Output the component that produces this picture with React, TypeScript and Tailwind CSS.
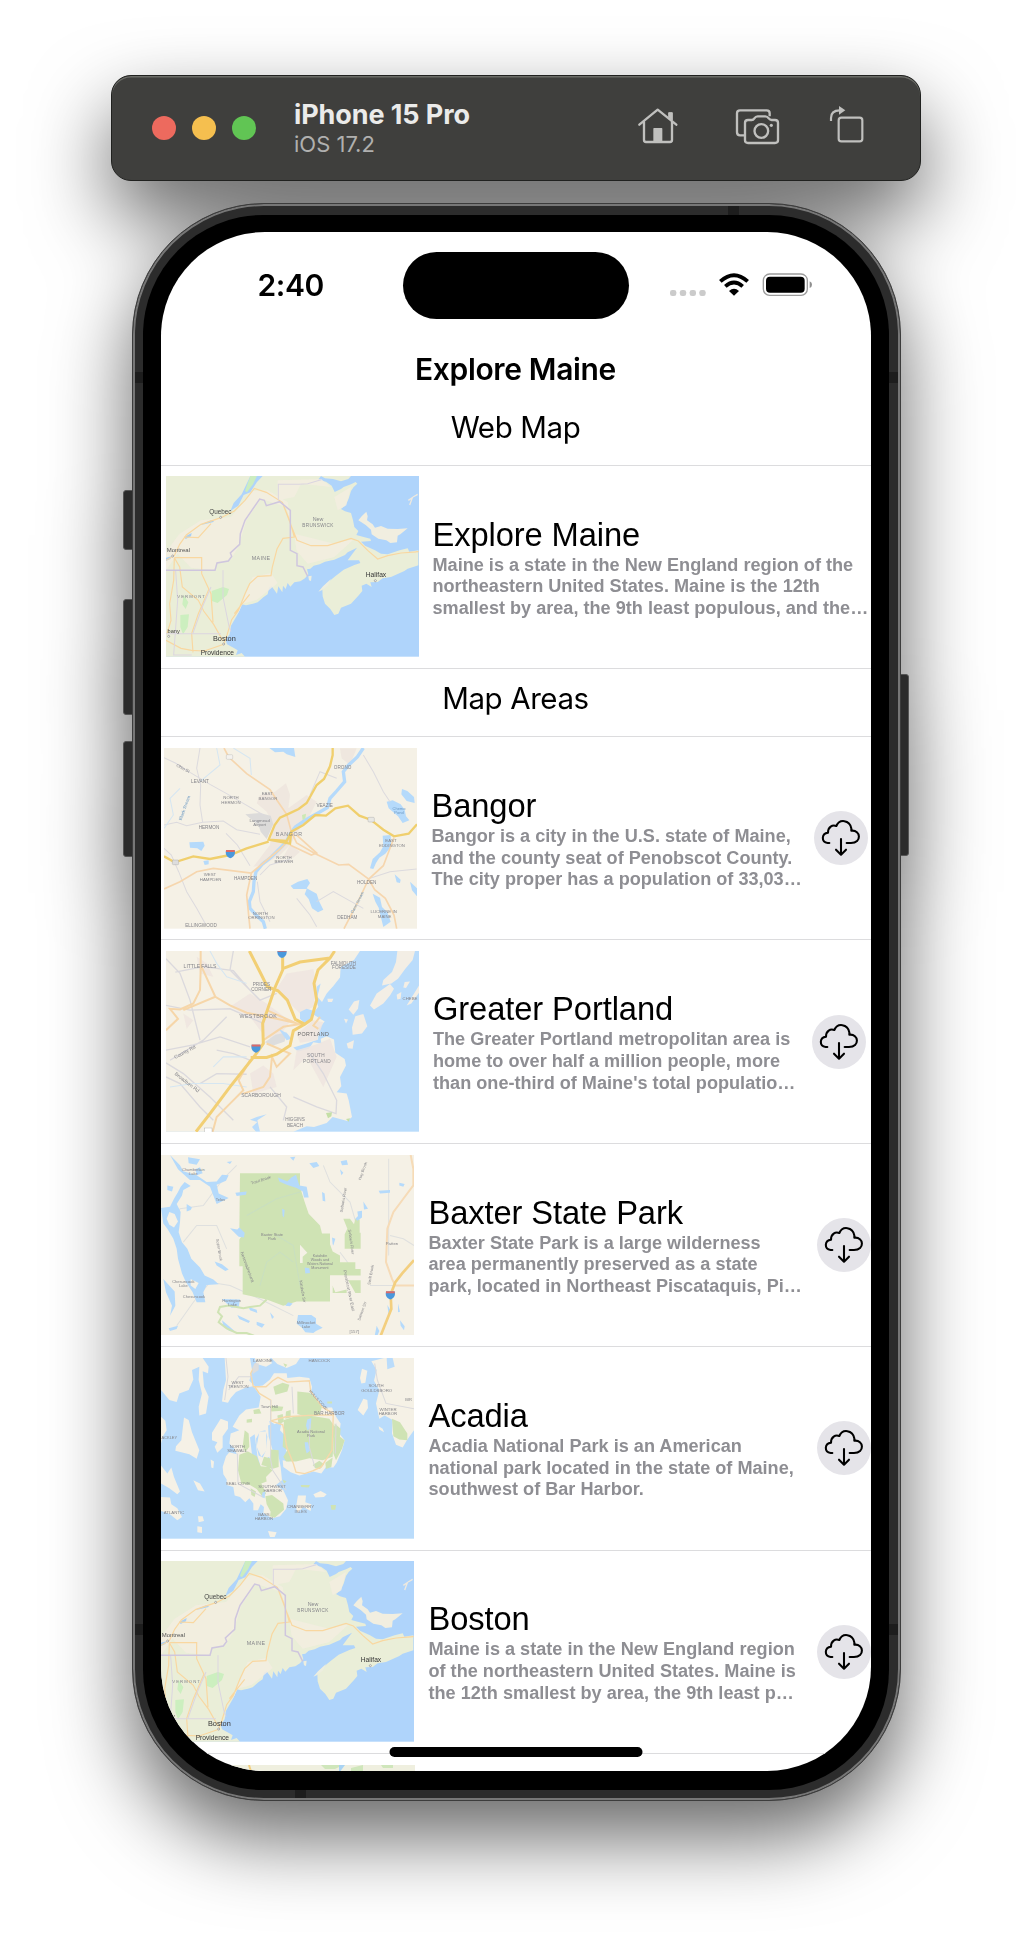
import React from "react";

const LABEL = "#85858a";

type LabelProps = { x: number; y: number; size?: number; fill?: string; rotate?: number; spacing?: number; children: string };

function Label({ x, y, size = 15, fill = LABEL, rotate = 0, spacing = 0, children }: LabelProps) {
  return (
    <text x={x} y={y} fontSize={size} fill={fill} textAnchor="middle" letterSpacing={spacing} fontFamily="'Liberation Sans', sans-serif" transform={`rotate(${rotate} ${x} ${y})`}>
      {children}
    </text>
  );
}

function Shield({ x, y }: { x: number; y: number }) {
  return (
    <g>
      <path d={`M${x - 13} ${y - 10}h26c3 12-2 20-13 24c-11-4-16-12-13-24z`} fill="#4a98dc" />
      <path d={`M${x - 13} ${y - 11}h26v6h-26z`} fill="#dc6a68" />
    </g>
  );
}

function MapFrame({ box, label, children }: { box: string; label: string; children: React.ReactNode }) {
  return (
    <svg className="h-[180.7px] w-[253px] shrink-0" viewBox={box} preserveAspectRatio="none" role="img" aria-label={label}>
      {children}
    </svg>
  );
}

function MaineMap() {
  return (
    <MapFrame box="135 467 759 542" label="Maine map">
      <rect x="135" y="467" width="759" height="542" fill="#afd4fb" />
      <path d="M135 467H600L590 480L615 484L632 496L641 515L660 506L668 500L690 492L704 485L709 490L698 500L690 512L683 535L672 556L660 566L672 573L690 578L696 600L700 620L712 632L706 644L728 650L748 655L750 662L720 664L732 676L762 690L780 700L800 702L836 690L860 684L865 694L892 690V735L860 745L850 752L810 770L785 774L770 785L748 786L752 800L736 790L722 796L724 812L712 826L690 850L660 862L652 880L640 884L628 866L612 850L605 828L604 806L614 792L640 770L668 748L700 734L718 728L714 720L680 720L690 706L708 682L680 696L672 704L640 718L612 724L596 732L578 736L568 745L558 747L562 762L552 774L538 783L520 786L508 799L500 788L494 806L486 796L484 816L472 798L468 820L452 798L444 802L440 822L428 830L410 846L396 850L375 855L362 852L356 870L344 892L330 916L326 942L314 958L318 972L340 984L350 990L345 1004L362 998L372 1009H135Z" fill="#eaeed8" />
      <path d="M640 467H690L682 476L660 483L636 476L612 474L600 467Z" fill="#eaeed8" />
      <path d="M712 600L722 588L736 574L740 588L738 600L755 612L762 622L780 617L800 625L830 626L860 624L838 642L830 646L828 666L808 668L796 660L772 655L752 642L750 628L734 614Z" fill="#f1eee0" />
      <path d="M862 540L874 532L866 554M876 530L890 522" stroke="#eee9df" strokeWidth="4" fill="none" />
      <path d="M562 768L572 766L570 782L564 780ZM592 814L606 798L630 776L620 796L602 810Z" fill="#edeee0" />
      <path d="M135 694L176 640L240 600L330 590L396 512L440 510L500 545L512 620L496 560L420 536L376 600L352 680L330 716L286 730L280 750L210 742L170 700L135 750ZM345 892L395 770L450 758L470 788L408 838L365 850ZM470 480L600 476L630 500L540 490L520 530L470 540ZM640 530L690 500L676 555L650 570ZM520 640L640 670L700 655L640 710L560 730L526 690Z" fill="#f3ede0" opacity=".85" />
      <path d="M388 467H425L408 485L388 516L368 524L352 556L328 572L338 548L362 522Z" fill="#afd4fb" />
      <path d="M388 467H408L396 492L378 516L372 512Z" fill="#ccedc0" />
      <path d="M272 812L306 800L324 806L318 824L290 848L272 842ZM188 824L202 846L194 866L184 852ZM178 884L204 882L200 920L186 942L178 920Z" fill="#ccefbf" />
      <path d="M190 650L212 638L210 648L194 656ZM236 614L270 600L280 604L250 612ZM135 712L152 708L148 716L135 722Z" fill="#a9cff4" />
      <path d="M135 720L160 706L176 672L196 644L240 612L300 592L340 572L372 540L400 504L436 516L484 546L512 620L528 660L570 676L620 676L690 654L712 662L740 690L770 716L800 706L840 698L893 694M484 546L506 600L520 650L486 654L468 686L454 740L450 766L410 768L386 790L372 820L352 870L332 898L318 944L308 972L250 992L212 990L180 984L135 960M160 712L176 740L184 800L232 840L248 872L278 912L306 962M160 712H242V760L270 820L276 906M216 996L212 940L232 880L264 806M160 712L158 780L146 850L150 900L138 940M386 822L340 880M190 650L232 652L270 610" fill="none" stroke="#f9d7a0" strokeWidth="3.5" />
      <path d="M135 750H282L288 728L322 722L332 708L328 698L356 672L358 640L372 600L416 536L430 540L436 556L476 544L508 570V690L528 700V736L546 740L560 768" fill="none" stroke="#cfc6de" strokeWidth="4.500" />
      <path d="M306 750V830L324 918L330 934M135 940H300M164 752L170 840L158 1004H212M472 540V492H534L560 490L600 478M270 800L244 860L216 938" fill="none" stroke="#dbd5e0" strokeWidth="3" />
      <Label x={298} y={580} size={19} fill="#444">Quebec</Label>
      <Label x={172} y={695} size={18} fill="#555">Montreal</Label>
      <Label x={591} y={602} size={16}>New</Label>
      <Label x={591} y={620} size={14} spacing={1}>BRUNSWICK</Label>
      <Label x={420} y={719} size={16} spacing={1}>MAINE</Label>
      <Label x={212} y={833} size={13} spacing={3}>VERMONT</Label>
      <Label x={765} y={769} size={20} fill="#333">Halifax</Label>
      <Label x={158} y={938} size={17} fill="#444">bany</Label>
      <Label x={310} y={963} size={22} fill="#333">Boston</Label>
      <Label x={289} y={1004} size={20} fill="#333">Providence</Label>
      <g fill="#fff" stroke="#888" strokeWidth="2">
        <circle cx="299" cy="591" r="3" /><circle cx="155" cy="707" r="3" /><circle cx="763" cy="781" r="3" /><circle cx="308" cy="971" r="3" /><circle cx="143" cy="948" r="3" />
      </g>
    </MapFrame>
  );
}

function BangorMap() {
  return (
    <MapFrame box="42 39 759 542" label="Bangor map">
      <rect x="42" y="39" width="759" height="542" fill="#f5f1e6" />
      <path d="M375 170L408 145L420 180L415 220L470 180L500 200L480 240L450 280L420 330L390 360L340 390L310 395L360 330L370 270L350 230L320 205L330 180ZM570 40H620L600 90L575 70ZM420 330L450 350L430 368L400 365Z" fill="#eee5de" opacity=".9" />
      <path d="M286 238L330 234L362 242L370 268L350 312L332 290L326 272Z" fill="#dcdbda" />
      <path d="M358 39H432L436 66L410 58L400 50L375 52ZM118 322L160 320L164 332L154 348L142 340L120 338ZM160 378L176 376V388L164 390ZM756 162L772 168L792 186L794 204L770 198L754 178ZM710 200L728 196L752 208L764 224L768 244L778 256L758 264L744 244L716 220ZM698 302L722 300L724 334L706 356L688 368L678 384L670 402L660 400L668 372L690 352L700 334ZM422 452L444 440L472 432L480 444L470 460L500 476L508 500L520 524L504 532L486 520L476 492L464 478L470 462L430 462ZM734 418L752 434L750 444L740 442ZM780 440L801 460V484L786 466ZM668 476L690 488L696 516L712 532L722 560L700 576L694 552L686 518L676 500Z" fill="#b5dafb" />
      <path d="M640 39L622 66L596 90L580 110L584 140L560 168L540 190L532 218L500 236L468 254L436 276L418 300L410 320L388 342L364 366L336 388L318 410L312 440L310 470L298 500L300 520L318 540L340 560L346 581" fill="none" stroke="#b5dafb" strokeWidth="10" />
      <path d="M42 68L76 84L120 112L180 148L230 176L280 205L340 240M150 39L140 100L152 150L150 210L158 262L220 258L260 284L330 298M42 270L80 262L110 272L158 262M228 295L262 330L300 392M42 340L64 360L86 410L110 470L140 520L165 565M330 420L360 390L420 372M322 440L330 500L360 560M480 180L510 110L560 130M440 490L480 540L500 575M500 500L550 470L640 520M660 430L720 410L800 402M640 60L670 110L700 170L720 200" fill="none" stroke="#dcdade" strokeWidth="3" />
      <path d="M42 280L70 240L60 190L90 160M200 39L210 90L150 140M250 39L300 70L304 120" fill="none" stroke="#d5e6f2" strokeWidth="3" />
      <path d="M222 39L236 66L290 116L360 164L384 200L410 238L424 290L440 324L496 356L566 390L596 388L656 432L674 464L706 490L732 540L740 581M42 462L90 440L140 410L190 400L304 414L340 384L390 342L420 312M304 414L290 480L300 581M656 432L624 500L582 581M656 432L700 392L716 350L732 308M440 300L500 354L484 360L420 330" fill="none" stroke="#f6d6ae" strokeWidth="5" />
      <path d="M548 39V60L540 94L522 132L500 150L470 204L446 222L412 238L390 248L374 270L356 314L410 318L424 290L460 270L496 240L528 242L556 220L594 212L628 242L662 254L700 284L732 304L776 296L801 268M42 364L74 382L130 364L180 372L240 360L290 340L356 320M356 314L420 326L424 290" fill="none" stroke="#f0cf6d" strokeWidth="7" />
      <path d="M456 240L468 236L466 250L458 256Z" fill="#cce8b4" />
      <rect x="229" y="59" width="19" height="14" rx="3" fill="#f4f2ee" stroke="#aaa" />
      <rect x="654" y="247" width="19" height="14" rx="3" fill="#e8e8e4" stroke="#999" />
      <rect x="67" y="375" width="19" height="14" rx="3" fill="#ddd" stroke="#999" />
      <Shield x={241} y={356} />
      <Label x={97} y={104} size={13} rotate={28}>Ohio St</Label>
      <Label x={150} y={145} size={14}>LEVANT</Label>
      <Label x={243} y={191} size={13}>NORTH</Label>
      <Label x={243} y={206} size={13}>HERMON</Label>
      <Label x={352} y={181} size={13}>EAST</Label>
      <Label x={354} y={195} size={13}>BANGOR</Label>
      <Label x={578} y={103} size={14}>ORONO</Label>
      <Label x={524} y={216} size={14}>VEAZIE</Label>
      <Label x={329} y={260} size={13}>Langmead</Label>
      <Label x={329} y={273} size={13}>Airport</Label>
      <Label x={177} y={282} size={14}>HERMON</Label>
      <Label x={418} y={304} size={16} spacing={2}>BANGOR</Label>
      <Label x={747} y={226} size={12} fill="#6d9ac3">Chemo</Label>
      <Label x={747} y={238} size={12} fill="#6d9ac3">Pond</Label>
      <Label x={723} y={321} size={13}>EAST</Label>
      <Label x={726} y={336} size={13}>EDDINGTON</Label>
      <Label x={402} y={371} size={13}>NORTH</Label>
      <Label x={402} y={385} size={13}>BREWER</Label>
      <Label x={180} y={422} size={13}>WEST</Label>
      <Label x={182} y={437} size={13}>HAMPDEN</Label>
      <Label x={287} y={435} size={14}>HAMPDEN</Label>
      <Label x={650} y={447} size={14}>HOLDEN</Label>
      <Label x={331} y={539} size={13}>NORTH</Label>
      <Label x={334} y={553} size={13}>ORRINGTON</Label>
      <Label x={592} y={553} size={14}>DEDHAM</Label>
      <Label x={701} y={533} size={13}>LUCERNE IN</Label>
      <Label x={704} y={548} size={13}>MAINE</Label>
      <Label x={153} y={576} size={14}>ELLINGWOOD</Label>
      <Label x={108} y={220} size={13} rotate={-70} fill="#6d9ac3">Black Stream</Label>
      <Label x={626} y={504} size={12} rotate={-62} fill="#6d9ac3">Dane Stream</Label>
    </MapFrame>
  );
}

function PortlandMap() {
  return (
    <MapFrame box="48 33 759 541" label="Greater Portland map">
      <rect x="48" y="33" width="759" height="541" fill="#badcfb" />
      <path d="M48 33H630L612 60L572 82L570 112L550 138L530 160L516 186L502 170L512 130L500 140L498 180L505 200L488 222L524 244L506 266L504 298L470 310L430 322L444 334L476 326L490 306L514 310L512 296L530 288L552 298L556 338L584 356L588 376L570 410L574 438L560 456L590 460L596 480L606 530L592 542L548 530L530 548L492 560L470 558L430 574H330L322 540L350 522L320 530L300 538L322 545L306 560L318 574H48Z" fill="#f5f1e6" />
      <path d="M742 33H795L788 60L766 86L744 116L724 130L696 136L700 120L726 96L738 66ZM660 196L680 160L720 132L732 146L720 166L700 190L672 208ZM596 208L612 184L628 180L624 206L610 224ZM606 262L616 228L640 222L652 258L636 280L608 284ZM532 176L550 176L546 186L534 186ZM590 310L612 300L608 326L594 324ZM764 126L780 124L768 144L760 142ZM740 164L754 156L752 176L742 178ZM770 196L807 136V158L784 190ZM582 236L594 238L588 250Z" fill="#f3eee5" />
      <path d="M378 150L410 100L490 88L500 140L490 200L450 220L420 190ZM240 200L300 160L350 190L390 220L420 244L380 300L345 290L300 230ZM300 400L340 376L370 400L380 440L310 460ZM440 330L500 312L540 296L560 350L520 440L470 350L430 390ZM440 282L490 240L520 246L500 300L450 308ZM100 220L130 240L110 266ZM140 50L170 70L190 110L150 100Z" fill="#eee5df" opacity=".85" />
      <path d="M344 306L376 284L410 276L404 304L370 316Z" fill="#dddddd" />
      <path d="M450 216L470 206L490 212L484 238L464 250L450 236ZM386 266L412 280L424 296L410 300Z" fill="#badcfb" />
      <path d="M48 56L90 100L120 180L150 300M76 96L160 80L250 92L300 150M48 196L120 210L240 206L340 250M48 330L130 314L210 290L300 320M150 430L200 400L290 402M48 368L100 400L180 470L250 540M48 410L90 430L150 500L190 540M250 33L240 90L330 180L380 160M230 230L160 300L60 360M480 340L520 400L560 480L558 520L500 500L430 470M360 440L410 500L400 540M300 360L250 340L200 330" fill="none" stroke="#dbd9dd" strokeWidth="4" />
      <path d="M180 33L200 70L230 110L290 130M60 440L130 430L220 430L290 440M190 380L220 350L290 350" fill="none" stroke="#d5e6f2" strokeWidth="3" />
      <path d="M152 33V90L150 150L130 190L90 208L60 206L84 236L48 270M150 70L196 170L240 196L290 218L380 236L460 254M196 170L100 210M340 300L400 260L460 250M300 360L266 420L280 450L240 490L200 530L188 574M350 310L420 340L380 380L366 350L360 410L340 440L280 460M510 230L490 256L505 266M350 210L440 250" fill="none" stroke="#f6d6a9" strokeWidth="6" />
      <path d="M298 33L330 96L352 140L384 152L412 180L436 238L464 252L484 238L500 180L492 130L504 90L540 54L554 33M398 33V90L376 140L352 210L338 250L340 310L316 344L240 440L180 520L138 574M398 86L450 66L540 54M464 252L430 272L420 316L380 342L350 352H302" fill="none" stroke="#f2cf74" strokeWidth="9" />
      <path d="M528 518L546 516L544 528L534 534ZM588 536L600 534L596 544Z" fill="#c5dfa6" />
      <Shield x={396} y={40} />
      <Shield x={318} y={324} />
      <rect x="164" y="563" width="22" height="14" fill="#fff" stroke="#999" />
      <Label x={150} y={84} size={15}>LITTLE FALLS</Label>
      <Label x={580} y={74} size={14}>FALMOUTH</Label>
      <Label x={582} y={88} size={14}>FORESIDE</Label>
      <Label x={334} y={137} size={14}>PRIDES</Label>
      <Label x={334} y={152} size={14}>CORNER</Label>
      <Label x={325} y={235} size={16} spacing={1}>WESTBROOK</Label>
      <Label x={490} y={289} size={16} spacing={1} fill="#666">PORTLAND</Label>
      <Label x={498} y={350} size={14} spacing={1}>SOUTH</Label>
      <Label x={501} y={367} size={14} spacing={1}>PORTLAND</Label>
      <Label x={333} y={469} size={15}>SCARBOROUGH</Label>
      <Label x={435} y={543} size={14}>HIGGINS</Label>
      <Label x={435} y={559} size={14}>BEACH</Label>
      <Label x={780} y={180} size={13}>CHEBE</Label>
      <Label x={107} y={340} rotate={-28}>County Rd</Label>
      <Label x={108} y={430} rotate={38}>Broadturn Rd</Label>
    </MapFrame>
  );
}

function BaxterMap() {
  return (
    <MapFrame box="33 29 759 541" label="Baxter State Park map">
      <rect x="33" y="29" width="759" height="541" fill="#f5f1e6" />
      <path d="M60 240L90 190L160 180L220 100L260 60M100 290L140 240L200 240L230 310M80 540L130 470L180 410L240 420L330 460L430 510M520 60L540 110L600 170L620 240M660 420H790M570 320L600 360M716 40V330M720 270L760 280L792 300" fill="none" stroke="#dfe0df" strokeWidth="3" />
      <path d="M270 84H450V124L464 170L476 205L510 240L516 264H540V296L548 318L570 330V350H616V370H632V390H540V468H440L400 480L350 462L278 446V362H268V282L276 270L268 260ZM450 298V352H458V334L472 322ZM580 220H600L612 236L616 220L629 222V262H632V310H584V266L592 250ZM594 404H632V442H616L606 424ZM548 420L556 440L590 432V442H548Z" fill="#cfe3b4" fillRule="evenodd" />
      <path d="M540 390H590V430L556 436L548 420Z" fill="#f5f1e6" />
      <path d="M290 210L380 160L450 140M330 420L350 350L390 320L430 350M380 270L430 300L450 420" fill="none" stroke="#c9dfc0" strokeWidth="3" />
      <path d="M60 29L90 60L100 78L140 90L170 110L200 108L216 88L236 90L228 106L200 118L206 144L236 158L200 176L190 150L180 124L150 104L120 104L84 72ZM114 36L150 42L140 58L116 54ZM136 72L150 66L158 84L140 90ZM33 188L60 184L72 160L84 140L92 124L104 110L122 122L100 134L96 150L80 176L92 200L90 230L86 260L96 290L112 310L124 340L150 366L164 390L190 402L206 416L170 418L160 440L166 470L140 470L128 440L108 410L96 384L84 340L80 310L70 280L52 250L40 234ZM52 120L70 124L66 138L52 134ZM110 176L126 186L122 194L110 198ZM240 248L262 252L268 246L284 262L282 276L266 274ZM256 142L290 138L288 148L260 152ZM384 96L412 108L424 96L438 88L448 120L470 124L476 156L462 156L458 138L440 128L410 118L388 108ZM478 54L500 50L508 62L490 68ZM572 48L590 44L594 58L576 60ZM516 140L524 144L526 168L518 166ZM640 168L654 190L642 192ZM622 198L636 196V216L622 226L616 220L624 212ZM686 136L720 134V142L690 144ZM748 112L764 116L760 124L748 120ZM464 366L478 368L480 382L466 384ZM546 276L556 280L550 300L548 296ZM194 348L216 356L236 372L226 376L200 360ZM444 508L484 508L498 518V534L518 546L498 556L490 562L466 560L456 546L440 534ZM216 460L270 462L266 484L244 486ZM216 524L240 544L256 558L238 556L220 540ZM262 508L300 526L296 532L268 520ZM296 484L320 492L322 502L300 494ZM40 400L74 438L76 480L60 510L66 480L48 440ZM744 474L750 498L744 500ZM750 524L764 542L762 554L752 540ZM712 478L722 494L716 508ZM680 540L688 556L682 570H674ZM414 470L428 474L420 482L406 480ZM320 528L344 536L336 546L320 538ZM396 190L404 194L402 216L398 212ZM56 548L84 540L80 550L60 556ZM360 500L372 514L366 520ZM570 72L580 82L574 90ZM230 50L246 48L240 56ZM420 36L436 34L430 46Z" fill="#b5dafb" />
      <path d="M58 200L74 206L84 228L72 246L58 238L50 220ZM122 400L146 412L136 430L122 420Z" fill="#f5f1e6" />
      <path d="M350 462L330 480L300 484L280 488L236 480L210 484L204 500L216 512L206 530L230 548L260 562L290 562L312 570" fill="none" stroke="#cfe3b4" strokeWidth="6" />
      <path d="M782 29L790 70V120L760 160L730 200L712 250L708 350L726 400L736 420H792" fill="none" stroke="#f6dbb7" strokeWidth="6" />
      <path d="M792 344L756 384L736 410L722 446L724 490L708 530L692 570" fill="none" stroke="#f3cf7f" strokeWidth="8" />
      <Shield x={721} y={448} />
      <Label x={130} y={77} size={12}>Chamberlain</Label>
      <Label x={130} y={88} size={12}>Lake</Label>
      <Label x={334} y={108} size={12} rotate={-18}>Trout Brook</Label>
      <Label x={366} y={272} size={12}>Baxter State</Label>
      <Label x={366} y={283} size={12}>Park</Label>
      <Label x={510} y={334} size={11}>Katahdin</Label>
      <Label x={510} y={346} size={11}>Woods and</Label>
      <Label x={510} y={358} size={11}>Waters National</Label>
      <Label x={510} y={370} size={11}>Monument</Label>
      <Label x={211} y={168} size={12}>Telos</Label>
      <Label x={726} y={298} size={13}>Patten</Label>
      <Label x={100} y={412} size={12}>Chesuncook</Label>
      <Label x={100} y={424} size={12}>Lake</Label>
      <Label x={132} y={458} size={12}>Chesuncook</Label>
      <Label x={245} y={469} size={12}>Harrington</Label>
      <Label x={248} y={480} size={12}>Lake</Label>
      <Label x={468} y={534} size={12}>Millinocket</Label>
      <Label x={468} y={546} size={12}>Lake</Label>
      <Label x={613} y={561} size={13}>[157]</Label>
      <Label x={288} y={366} size={13} rotate={70}>Nesowadnehunk</Label>
      <Label x={584} y={164} size={12} rotate={-80}>Seboeis River</Label>
      <Label x={642} y={78} size={12} rotate={-70}>Hay Brook</Label>
      <Label x={600} y={290} size={12} rotate={82}>Seboeis River</Label>
      <Label x={593} y={436} size={13} rotate={78}>Penobscot River East</Label>
      <Label x={204} y={314} size={12} rotate={80}>Soper Brook</Label>
      <Label x={454} y={438} size={12} rotate={80}>Katahdin Str</Label>
      <Label x={666} y={388} size={12} rotate={-80}>Swift Brook</Label>
      <Label x={640} y={498} size={12} rotate={-70}>Salmon Str</Label>
    </MapFrame>
  );
}

function AcadiaMap() {
  return (
    <MapFrame box="35 24 759 541" label="Acadia map">
      <rect x="35" y="24" width="759" height="541" fill="#badcfb" />
      <path d="M35 24H160L178 50L176 70L160 64L164 110L178 140L170 190L150 196L148 170L158 130L148 90L150 50L128 60L132 88L118 120L90 130L82 156L60 150L35 120ZM226 24H302L308 60L300 92L316 108L290 112L260 126L244 144L236 158L218 154L222 120L230 90ZM316 24H362L368 40L350 50L322 42ZM366 24H452L440 42L412 54L384 42ZM104 202L118 210L128 246L150 300L142 326L120 312L96 306L78 302L80 288L96 270ZM35 200L48 212L52 240L42 256L35 280ZM35 346L54 370L66 352L74 380L92 424L84 432L60 414L35 400ZM35 440L62 442L66 462L84 474L98 500L84 510L60 490L35 482ZM188 248L214 206L236 214V236L220 258V292L204 308L196 290L204 276L188 270ZM132 390L152 400L166 424L146 420ZM146 498L160 498L164 512L148 516ZM144 528L158 530L158 548L144 546ZM356 542L382 546L376 560L362 560ZM184 328L194 334L192 354L186 352ZM638 56L654 62L648 98L636 100L632 84ZM625 180L642 146L654 150L656 174L642 196ZM666 34L704 24H794V240L774 268L760 292L740 284L728 250L730 210L706 196L690 206L680 160L690 120L674 92L682 60ZM688 228L700 236L704 246L690 238ZM492 432L514 422L532 432L524 440L498 442ZM446 436L470 436L468 456L486 462L484 482L462 470L444 488L440 470Z" fill="#f5f1e6" />
      <path d="M712 24H730L736 50L714 58Z" fill="#badcfb" />
      <path d="M362 88L374 70L412 70L414 84L450 80L480 84L488 110L484 134L502 158L520 172L548 172L560 200L574 220L570 250L586 270L578 300L562 338L552 352L530 350L516 370L492 364L450 376L424 366L402 350L400 330L420 334L410 300V260L392 240L398 210L376 222L360 212L366 250L372 290L384 300L394 350L398 390L380 404L402 420L416 450L410 476L392 498L368 504L342 488L344 470L334 462L326 480H312V460L300 444L288 456L272 440L256 436L252 410L232 404V388L222 372L220 350L230 318L240 306L262 312L256 296L240 280L244 250L270 240L250 230L270 196L290 178L328 172L334 140L314 110L340 106ZM320 266L332 244L348 240L354 260L350 300L340 322L328 316L322 290Z" fill="#f5f1e6" fillRule="evenodd" />
      <path d="M302 262L316 252L324 316L334 350L326 360L310 330ZM356 226L366 222L372 250L384 300L370 300L358 260ZM352 324L360 320L362 360L352 350Z" fill="#badcfb" />
      <path d="M330 244H350L352 300L336 320L322 290Z" fill="#f5f1e6" />
      <path d="M270 314L296 304L322 318L334 348L356 350L370 360L350 380L352 394L336 400L350 430L340 440L322 416L302 404L276 400L266 360ZM286 240L298 250L300 290L288 306L280 290ZM364 298L388 300V350L368 356L350 348L336 344L344 320L362 324ZM404 210L440 198H490L540 206L556 230L550 320L520 330L480 324L440 334L410 334L402 320L414 300L400 290ZM444 124L480 128L498 142L518 170L510 196L470 200L444 192ZM556 220L574 236L572 260L586 270L578 296L560 330L552 310ZM348 438L368 434L402 460L404 478L376 502L362 498L364 484L352 462ZM384 196L400 192L404 214L388 224ZM410 184L424 180V202L408 206ZM372 110L400 98L420 104L414 124L378 134ZM312 180L330 176L336 190L314 192ZM292 208L308 206V216L292 218ZM360 166L402 170L398 182L366 184ZM728 206L752 216L774 250V270L750 268L732 258ZM544 464L560 464L558 478L546 478ZM454 404H482L478 412L456 410ZM400 388L412 394L404 400ZM528 338L550 322L546 350L530 356ZM490 344L510 332L524 342L512 356L498 354ZM304 414L320 424L316 440L306 434ZM402 40L414 44L408 52ZM534 154H548V160H534Z" fill="#cfe3b4" />
      <path d="M474 208L486 204L484 234L474 240L470 226ZM466 276L476 276L482 302L472 310L468 294ZM340 426L348 424L346 444L336 440Z" fill="#badcfb" />
      <path d="M320 40L304 70L312 110H350L370 92L386 82L414 96L480 92L484 124L520 172L552 190L548 300L516 350L490 362L466 370L440 366L432 340L412 290L404 240L400 224L364 212V150L330 130L316 110M364 212L410 200L480 196L552 194" fill="none" stroke="#f6d8aa" strokeWidth="4" />
      <path d="M364 150V330L370 360L410 420M230 24L236 80L226 150M310 80H268L238 120M264 310L266 400L340 440M482 220L480 290L496 350M676 40L684 90L710 160L794 176M428 110L432 190M560 220L558 310" fill="none" stroke="#dad9dc" strokeWidth="3" />
      <path d="M316 40H328V60L310 72V52Z" fill="#ddd" />
      <Label x={341} y={35} size={13}>LAMOINE</Label>
      <Label x={510} y={35} size={13}>HANCOCK</Label>
      <Label x={265} y={101} size={13}>WEST</Label>
      <Label x={267} y={114} size={13}>TRENTON</Label>
      <Label x={360} y={175} size={13}>Town Hill</Label>
      <Label x={540} y={194} size={14}>BAR HARBOR</Label>
      <Label x={504} y={152} size={12} rotate={48}>HULLS COVE</Label>
      <Label x={485} y={249} size={12}>Acadia National</Label>
      <Label x={485} y={261} size={12}>Park</Label>
      <Label x={264} y={293} size={13}>NORTH</Label>
      <Label x={264} y={306} size={13}>SEAWALL</Label>
      <Label x={266} y={403} size={13}>SEAL COVE</Label>
      <Label x={368} y={413} size={13}>SOUTHWEST</Label>
      <Label x={370} y={426} size={13}>HARBOR</Label>
      <Label x={454} y={473} size={13}>CRANBERRY</Label>
      <Label x={454} y={487} size={13}>ISLES</Label>
      <Label x={344} y={496} size={13}>BASS</Label>
      <Label x={344} y={509} size={13}>HARBOR</Label>
      <Label x={680} y={112} size={13}>SOUTH</Label>
      <Label x={682} y={125} size={13}>GOULDSBORO</Label>
      <Label x={716} y={182} size={13}>WINTER</Label>
      <Label x={716} y={195} size={13}>HARBOR</Label>
      <Label x={60} y={267} size={12}>ACKLEY</Label>
      <Label x={74} y={492} size={13}>ATLANTIC</Label>
      <Label x={778} y={152} size={12}>BIR</Label>
    </MapFrame>
  );
}

const cloudPath = "M877 320H872C852 318 853 291 873 289C873 272 886 264 898 269C907 247 938 250 943 276V283C972 280 975 320 942 320H929";

function DownloadButton({ margin }: { margin: string }) {
  return (
    <button aria-label="Download map" className={`h-[54px] w-[54px] shrink-0 rounded-full bg-[#e5e4e9] ${margin}`}>
      <svg viewBox="831 224 162 162" className="h-full w-full" fill="none" stroke="#000" strokeWidth="6.2" strokeLinecap="round" strokeLinejoin="round">
        <path d={cloudPath} />
        <path d="M912 308V354M897 340L912 355L927 340" />
      </svg>
    </button>
  );
}

type Area = { title: string; lines: string[]; map: React.ReactNode; left: string; gap: string; right?: string };

const web: Area = {
  title: "Explore Maine",
  lines: ["Maine is a state in the New England region of the", "northeastern United States. Maine is the 12th", "smallest by area, the 9th least populous, and the…"],
  map: <MaineMap />,
  left: "pl-[5px]",
  gap: "ml-[14px]",
};

const areas: Area[] = [
  { title: "Bangor", lines: ["Bangor is a city in the U.S. state of Maine,", "and the county seat of Penobscot County.", "The city proper has a population of 33,03…"], map: <BangorMap />, left: "pl-[3px]", gap: "ml-[15px]", right: "mr-[2.5px]" },
  { title: "Greater Portland", lines: ["The Greater Portland metropolitan area is", "home to over half a million people, more", "than one-third of Maine's total populatio…"], map: <PortlandMap />, left: "pl-[5px]", gap: "ml-[14.500px]", right: "mr-[5px]" },
  { title: "Baxter State Park", lines: ["Baxter State Park is a large wilderness", "area permanently preserved as a state", "park, located in Northeast Piscataquis, Pi…"], map: <BaxterMap />, left: "pl-0", gap: "ml-[15px]", right: "mr-0" },
  { title: "Acadia", lines: ["Acadia National Park is an American", "national park located in the state of Maine,", "southwest of Bar Harbor."], map: <AcadiaMap />, left: "pl-0", gap: "ml-[15px]", right: "mr-0" },
  { title: "Boston", lines: ["Maine is a state in the New England region", "of the northeastern United States. Maine is", "the 12th smallest by area, the 9th least p…"], map: <MaineMap />, left: "pl-0", gap: "ml-[15px]", right: "mr-0" },
];

function Row({ area }: { area: Area }) {
  return (
    <article className={`flex h-[203.4px] shrink-0 items-center border-t border-[#dcdcde] ${area.left}`}>
      {area.map}
      <div className={`min-w-0 flex-1 pt-[2.500px] whitespace-nowrap font-['Liberation_Sans',sans-serif] ${area.gap}`}>
        <h3 className="text-[32.7px] leading-[36px] tracking-[-0.1px] text-black">{area.title}</h3>
        <p className="mt-[2px] text-[18.12px] leading-[21.67px] font-bold text-[#8e8e93]">
          {area.lines.map((line) => (
            <span key={line} className="block">{line}</span>
          ))}
        </p>
      </div>
      {area.right && <DownloadButton margin={area.right} />}
    </article>
  );
}

function TitleBar() {
  return (
    <header className="mx-auto flex h-[106px] w-[810px] items-center rounded-[20px] border border-[#20211f] bg-[#3f3f3d] pr-[54px] pl-[40px] shadow-[inset_0_1.5px_0_#6b6c67]">
      <div className="flex gap-4">
        <span className="h-6 w-6 rounded-full bg-[#ed6a5e]" />
        <span className="h-6 w-6 rounded-full bg-[#f5bf4f]" />
        <span className="h-6 w-6 rounded-full bg-[#61c554]" />
      </div>
      <div className="mb-[1px] ml-[38px]">
        <h1 className="text-[27px] leading-[32px] font-bold tracking-[-0.1px] text-[#ebebea]">iPhone 15 Pro</h1>
        <p className="text-[22px] leading-[26px] text-[#b0b0af]">iOS 17.2</p>
      </div>
      <div className="mb-1 ml-auto flex items-center text-[#c0c0be]">
        <svg className="h-[42px] w-[42px]" viewBox="290 135 126 126" fill="none" stroke="currentColor" strokeWidth="7" strokeLinecap="round" strokeLinejoin="round">
          <path d="M297 194L352 149L408 194M311 186V240Q311 246 317 246H389Q395 246 395 240V186" />
          <path d="M386 158H396V180L386 172Z" fill="currentColor" strokeWidth="3" />
          <path d="M341 206H364V245H341Z" fill="currentColor" strokeWidth="4" />
        </svg>
        <svg className="ml-[56px] h-[42px] w-[45px]" viewBox="585 135 135 126" fill="none" stroke="currentColor" strokeWidth="7" strokeLinejoin="round">
          <path d="M613 226H600Q591 226 591 217V160Q591 151 600 151H680Q689 151 689 160V169" />
          <path d="M615 241V188Q615 180 624 180H635Q640 180 643 175Q647 169 653 169H676Q682 169 686 175Q690 180 695 180H705Q714 180 714 188V241Q714 249 705 249H624Q615 249 615 241Z" />
          <circle cx="664" cy="213" r="20.5" />
          <circle cx="694" cy="196" r="4.8" fill="currentColor" stroke="none" />
        </svg>
        <svg className="ml-[48px] h-[42px] w-[38px]" viewBox="864 135 114 126" fill="none" stroke="currentColor" strokeWidth="6.500">
          <rect x="896" y="173" width="71" height="71" rx="8" />
          <path d="M873 183V174Q873 151 899 151" />
          <path d="M897 138L916 151L897 164Z" fill="currentColor" stroke="none" />
        </svg>
      </div>
    </header>
  );
}

function StatusBar() {
  return (
    <div className="mt-[20.3px] flex h-[66.3px] shrink-0 items-center">
      <span className="w-[242.3px] pl-[97px] text-[30px] leading-none font-semibold tracking-[-0.4px]">2:40</span>
      <div className="h-full w-[226px] rounded-full bg-black" />
      <div className="ml-[41px] flex items-center gap-[13px]">
        <svg className="h-6 w-9" viewBox="390 639 108 72" fill="#cbcbcb">
          <rect x="390" y="690" width="19" height="18" rx="7" />
          <rect x="419.500" y="690" width="19" height="18" rx="7" />
          <rect x="449" y="690" width="19" height="18" rx="7" />
          <rect x="478" y="690" width="19" height="18" rx="7" />
        </svg>
        <svg className="h-6 w-[30px]" viewBox="537 639 90 72">
          <path d="M541 664Q582 627 623 664M556 679Q582 656 608 679" fill="none" stroke="#000" strokeWidth="11.500" />
          <path d="M567 693Q582 680 597 693L582 707Z" />
        </svg>
        <svg className="h-6 w-[51px]" viewBox="666 639 153 72">
          <rect x="670" y="642" width="132" height="64" rx="19" fill="none" stroke="#9b9b9b" strokeWidth="4" />
          <rect x="678" y="650" width="116" height="48" rx="12" />
          <path d="M809 664Q817 668 816 674Q816 681 809 684Z" fill="#8f8f8f" />
        </svg>
      </div>
    </div>
  );
}

function SectionHeader({ children, line = false }: { children: string; line?: boolean }) {
  return (
    <h2 className={`flex h-[68px] shrink-0 items-center justify-center border-t pb-[6.500px] text-[29.5px] leading-none tracking-[-0.4px] ${line ? "border-[#dcdcde]" : "border-transparent"}`}>
      {children}
    </h2>
  );
}

export default function App() {
  return (
    <div className="h-[1952px] w-[1032px] overflow-hidden bg-white pt-[75px] font-['Inter',sans-serif] text-black">
      <div className="drop-shadow-[0_36px_40px_rgba(0,0,0,0.6)]">
        <TitleBar />
        <div className="relative mx-auto mt-[22px] h-[1598px] w-[769px]">
          <span className="absolute top-[287px] -left-[9px] h-[60px] w-[10px] rounded-l-[3px] border border-[#555] bg-[#2b2b2b]" />
          <span className="absolute top-[396px] -left-[9px] h-[116px] w-[10px] rounded-l-[3px] border border-[#555] bg-[#2b2b2b]" />
          <span className="absolute top-[538px] -left-[9px] h-[116px] w-[10px] rounded-l-[3px] border border-[#555] bg-[#2b2b2b]" />
          <span className="absolute top-[471px] -right-[8px] h-[182px] w-[10px] rounded-r-[3px] border border-[#555] bg-[#2b2b2b]" />
          <div className="relative h-full rounded-[132px] border border-[#3c3c3c] bg-[#2c2c2c] p-[10.500px] shadow-[inset_0_0_0_2px_#777]">
            <span className="absolute top-[168px] left-[2px] h-[11px] w-[9px] bg-[#1d1d1d]" />
            <span className="absolute top-[168px] right-[2px] h-[11px] w-[9px] bg-[#1d1d1d]" />
            <span className="absolute top-[1420px] left-[2px] h-[11px] w-[9px] bg-[#1d1d1d]" />
            <span className="absolute top-[1420px] right-[2px] h-[11px] w-[9px] bg-[#1d1d1d]" />
            <span className="absolute top-[2px] right-[161px] h-[9px] w-[11px] bg-[#1d1d1d]" />
            <span className="absolute bottom-[2px] left-[162px] h-[9px] w-[11px] bg-[#1d1d1d]" />
            <div className="relative h-full rounded-[120px] bg-black pt-[17.500px] pr-[18.500px] pb-[18.500px] pl-[17.500px]">
              <main className="relative flex h-full flex-col overflow-hidden rounded-[104px] bg-white">
                <StatusBar />
                <div className="flex h-[78px] shrink-0 items-center justify-center pt-[23px] text-[30px] leading-none font-semibold tracking-[-0.35px]">Explore Maine</div>
                <SectionHeader>Web Map</SectionHeader>
                <Row area={web} />
                <SectionHeader line>Map Areas</SectionHeader>
                {areas.map((area) => <Row key={area.title} area={area} />)}
                <div className="h-5 shrink-0 border-t border-[#dcdcde] pt-[11px]">
                  <svg className="h-[10px] w-[254px]" viewBox="0 0 254 10">
                    <path d="M0 0H254V10H0Z" fill="#efefdf" />
                    <path d="M160 0H182L174 4H164ZM190 3L202 0V10H190ZM220 0H232V3H222Z" fill="#cfe6bb" />
                    <path d="M178 0H184L178 8Z" fill="#a9d3f3" />
                    <path d="M88 0L91 10" stroke="#f3cf7f" strokeWidth="2" />
                  </svg>
                </div>
                <div className="absolute bottom-[14.500px] left-1/2 h-[9.500px] w-[253px] -translate-x-1/2 rounded-full bg-black" />
              </main>
            </div>
          </div>
        </div>
      </div>
    </div>
  );
}
